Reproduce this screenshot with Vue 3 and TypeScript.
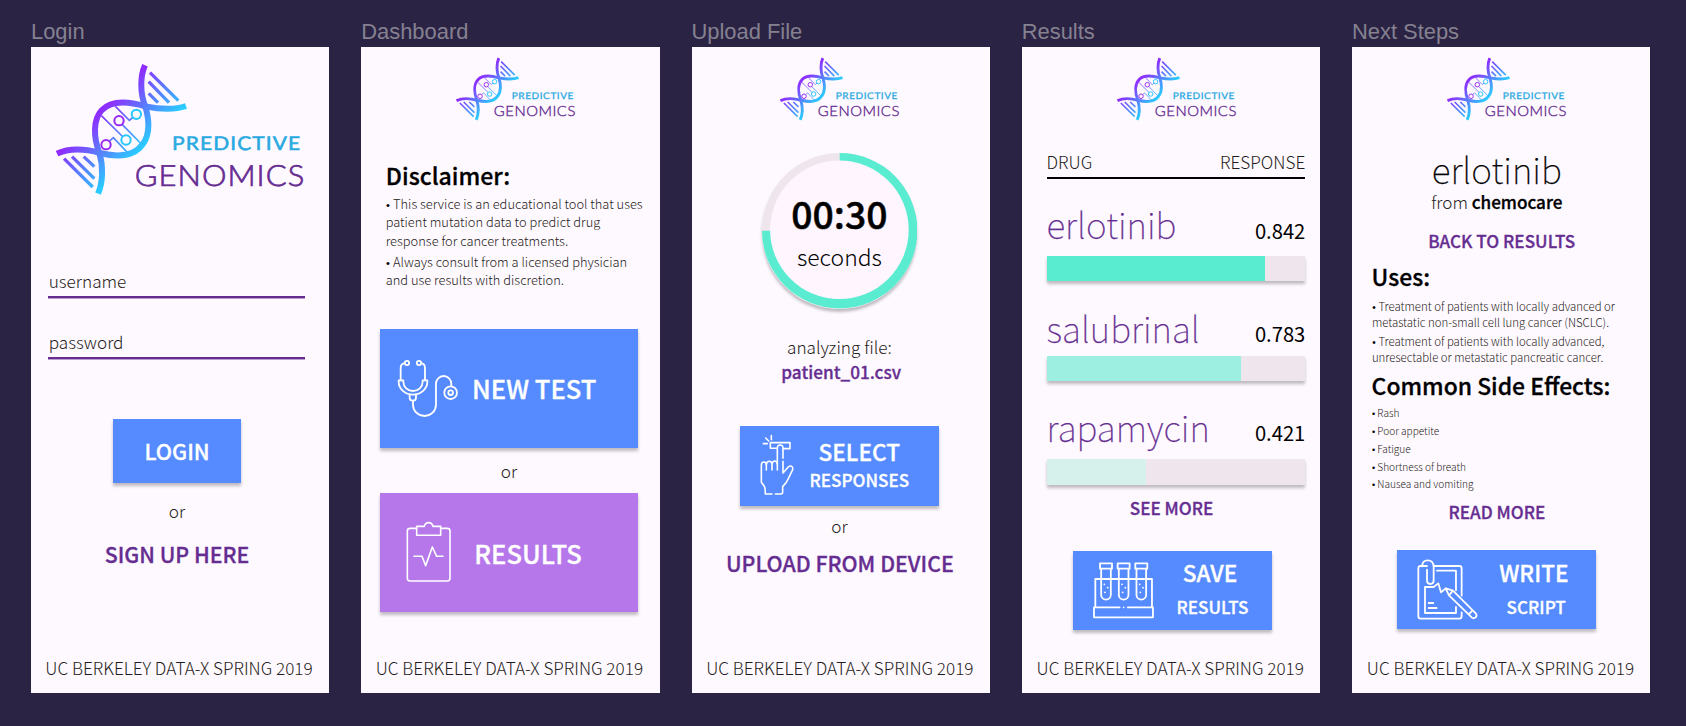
<script setup lang="ts">
interface DrugResult {
  name: string
  score: string
  fill: number
  color: string
}

const footer = 'UC BERKELEY DATA-X SPRING 2019'

const drugs: DrugResult[] = [
  { name: 'erlotinib', score: '0.842', fill: 84.6, color: '#5aecd1' },
  { name: 'salubrinal', score: '0.783', fill: 75.3, color: '#9df0e1' },
  { name: 'rapamycin', score: '0.421', fill: 38.5, color: '#d6f1eb' },
]

const sideEffects: string[] = ['Rash', 'Poor appetite', 'Fatigue', 'Shortness of breath', 'Nausea and vomiting']

const tubeCenters: number[] = [287, 340, 393]
</script>

<template>
  <div class="board">
    <svg class="defs" width="0" height="0" aria-hidden="true">
      <defs>
        <linearGradient id="helix" gradientUnits="userSpaceOnUse" x1="272" y1="272" x2="392" y2="392">
          <stop offset="0" stop-color="#8f2bff" />
          <stop offset="0.5" stop-color="#5a7dff" />
          <stop offset="1" stop-color="#29cdff" />
        </linearGradient>
        <symbol id="logo" viewBox="108 160 750 400">
          <g fill="none" stroke="url(#helix)">
            <path stroke-width="18" d="M375 167C360 200 360 252 376 290C389 335 391 374 368 404C342 441 292 443 240 430C196 418 150 414 111 432" />
            <path stroke-width="18" d="M498 289C460 302 420 299 376 290C322 274 272 273 245 302C219 330 220 382 238 430C250 470 249 518 234 552" />
            <path stroke-width="10" d="M390 189L475 273M386 216L447 279M386 251L414 279M132 447L218 532M156 441L223 507M191 441L223 471" />
            <path stroke-width="5" d="M244 318L309 382M286 290L328 332L340 322M307 345L364 403M269 394L280 384L322 428" />
            <g stroke-width="6">
              <circle cx="349" cy="314" r="14" stroke="#27c8ff" />
              <circle cx="318" cy="391" r="14" stroke="#27c8ff" />
              <circle cx="297" cy="333" r="14" stroke="#9a28f4" />
              <circle cx="258" cy="405" r="14" stroke="#9a28f4" />
            </g>
          </g>
          <text class="logo-top" x="456" y="420" textLength="388" lengthAdjust="spacingAndGlyphs">PREDICTIVE</text>
          <text class="logo-main" x="344" y="530" textLength="512" lengthAdjust="spacingAndGlyphs">GENOMICS</text>
        </symbol>
      </defs>
    </svg>

    <section class="frame">
      <h2 class="label">Login</h2>
      <div class="screen login">
        <svg class="logo-big"><use href="#logo" /></svg>
        <div class="field first">username</div>
        <div class="field">password</div>
        <button class="btn btn-login">LOGIN</button>
        <p class="or">or</p>
        <a class="link big">SIGN UP HERE</a>
        <footer class="foot">{{ footer }}</footer>
      </div>
    </section>

    <section class="frame">
      <h2 class="label">Dashboard</h2>
      <div class="screen dash">
        <svg class="logo"><use href="#logo" /></svg>
        <h3 class="title">Disclaimer:</h3>
        <div class="notes">
          <p><span class="dot">•</span>This service is an educational tool that uses<br>patient mutation data to predict drug<br>response for cancer treatments.</p>
          <p><span class="dot">•</span>Always consult from a licensed physician<br>and use results with discretion.</p>
        </div>
        <button class="btn tile tile-new">
          <svg class="icon" viewBox="108 145 190 182" width="63.3" height="60.7">
            <g class="line">
              <circle cx="141" cy="160" r="6.5" /><circle cx="177" cy="160" r="6.5" />
              <path d="M134 160Q122 162 122 175V212M184 160Q195 162 195 175V212" />
              <path d="M116 212H130V216A29 28 0 0 0 188 216V212H202V216A43 39 0 0 1 116 216Z" />
              <path d="M149 255V265Q149 273 158.500 273Q168 273 168 265V254" />
              <path d="M159 274V285A34.500 34 0 0 0 228 285V222A23 23 0 0 1 274 222V229" />
              <circle cx="272" cy="249" r="19" /><circle cx="272" cy="249" r="7" />
            </g>
          </svg>
          <span>NEW TEST</span>
        </button>
        <p class="or">or</p>
        <button class="btn tile tile-results">
          <svg class="icon" viewBox="135 630 141 190" width="47" height="63.3">
            <g class="line thin">
              <path d="M168 655H150Q142 655 142 663V805Q142 813 150 813H262Q270 813 270 805V663Q270 655 262 655H244" />
              <path d="M170 649H193Q196 638 206 638Q216 638 219 649H242V676H170Z" />
              <path d="M162 739H186L197 767L217 711L230 739H249" />
            </g>
          </svg>
          <span>RESULTS</span>
        </button>
        <footer class="foot">{{ footer }}</footer>
      </div>
    </section>

    <section class="frame">
      <h2 class="label">Upload File</h2>
      <div class="screen upload">
        <svg class="logo"><use href="#logo" /></svg>
        <div class="timer">
          <svg class="ring" viewBox="0 0 155.400 155.400">
            <circle cx="77.700" cy="77.700" r="77.700" fill="#efe5ed" />
            <path d="M77.700 77.700V0A77.700 77.700 0 1 1 0 77.700Z" fill="#5aecd1" />
            <circle cx="77.400" cy="76.800" r="69.300" fill="#fff5ff" />
          </svg>
          <strong class="time">00:30</strong>
          <span class="unit">seconds</span>
        </div>
        <p class="analyzing">analyzing file:</p>
        <p class="link filename">patient_01.csv</p>
        <button class="btn action action-select">
          <svg class="icon" viewBox="115 70 108 187" width="36" height="62.3">
            <g class="line thin">
              <path d="M128 99H140M135 82L144 91M152 75V87" />
              <path d="M168 113H149V96H208V114H189" />
              <path d="M170 178V112Q170 103 178.500 103Q187 103 187 112V143" />
              <path d="M137 178V163Q137 154 129.500 154Q122 154 122 163V215L131 227Q134 232 134 250H154" />
              <path d="M137 162Q138 152 146 152Q154 152 154 162V178M154 162Q155 151 163 151Q170 152 170 160" />
              <path d="M164 250H181Q186 250 186 244V228Q198 217 202 206L216 177Q218 166 208 166Q205 166 202 170L187 187V152" />
            </g>
          </svg>
          <span class="stack"><b>SELECT</b><i>RESPONSES</i></span>
        </button>
        <p class="or">or</p>
        <a class="link big">UPLOAD FROM DEVICE</a>
        <footer class="foot">{{ footer }}</footer>
      </div>
    </section>

    <section class="frame">
      <h2 class="label">Results</h2>
      <div class="screen results">
        <svg class="logo"><use href="#logo" /></svg>
        <div class="thead"><span>DRUG</span><span>RESPONSE</span></div>
        <div v-for="d in drugs" :key="d.name" class="drug">
          <div class="row"><span class="name">{{ d.name }}</span><span class="score">{{ d.score }}</span></div>
          <div class="bar"><div class="fill" :style="{ width: d.fill + '%', background: d.color }"></div></div>
        </div>
        <a class="link small">SEE MORE</a>
        <button class="btn action wide">
          <svg class="icon" viewBox="245 782 190 176" width="63.3" height="58.7">
            <g class="line">
              <g v-for="c in tubeCenters" :key="c">
                <rect :x="c - 18" y="789" width="36" height="16" />
                <path :d="`M${c - 14.5} 805V883A14.500 15 0 0 0 ${c + 14.5} 883V805`" />
                <path :d="`M${c - 5} 852h.1M${c + 5} 862h.1M${c - 3} 876h.1`" />
              </g>
              <path d="M255 920V836H425V920M328 921H251V951H428V921H352M340 921h.1" />
            </g>
          </svg>
          <span class="stack"><b>SAVE</b><i>RESULTS</i></span>
        </button>
        <footer class="foot">{{ footer }}</footer>
      </div>
    </section>

    <section class="frame">
      <h2 class="label">Next Steps</h2>
      <div class="screen next">
        <svg class="logo"><use href="#logo" /></svg>
        <h3 class="drug-title">erlotinib</h3>
        <p class="source">from <strong>chemocare</strong></p>
        <a class="link small back">BACK TO RESULTS</a>
        <h3 class="title uses">Uses:</h3>
        <div class="notes">
          <p><span class="dot">•</span>Treatment of patients with locally advanced or<br>metastatic non-small cell lung cancer (NSCLC).</p>
          <p><span class="dot">•</span>Treatment of patients with locally advanced,<br>unresectable or metastatic pancreatic cancer.</p>
        </div>
        <h3 class="title effects">Common Side Effects:</h3>
        <ul class="list">
          <li v-for="s in sideEffects" :key="s"><span class="dot">•</span>{{ s }}</li>
        </ul>
        <a class="link small more">READ MORE</a>
        <button class="btn action wide">
          <svg class="icon" viewBox="229 593 190 189" width="63.3" height="63">
            <g class="line">
              <path d="M284 617H359Q366 617 366 624V706M366 756V768Q366 775 359 775H243Q236 775 236 768V624Q236 617 243 617H262" />
              <path d="M247 618Q248 600 264 600Q282 600 282 620V660Q282 671 272 671Q262 671 262 660V628" />
              <path d="M292 631H349V690M349 740V758H256V680H282L296 669L304 696L318 684" />
              <path d="M267 728H281M267 743H291" />
              <path d="M318 684L340 691L409 760Q413 766 408 771Q402 776 397 772L328 705ZM340 691L328 705M399 750L387 762" />
            </g>
          </svg>
          <span class="stack"><b>WRITE</b><i>SCRIPT</i></span>
        </button>
        <footer class="foot">{{ footer }}</footer>
      </div>
    </section>
  </div>
</template>

<style>
body {
  margin: 0;
  background: #2b2343;
}
</style>

<style scoped>
.board {
  display: flex;
  gap: 32px;
  box-sizing: border-box;
  width: 1686px;
  height: 726px;
  padding: 19px 0 0 31px;
  overflow: hidden;
  background: #2b2343;
  font-family: "Noto Sans CJK SC", "Noto Sans", sans-serif;
}
.defs { position: absolute; }
.frame { flex: none; width: 298.25px; }
h2, h3, p, ul { margin: 0; padding: 0; font-weight: inherit; }
.label {
  height: 25px;
  margin-bottom: 3px;
  color: #858191;
  font: 21.9px/25px "Liberation Sans", Arial, sans-serif;
}
.screen {
  display: flex;
  flex-direction: column;
  align-items: center;
  box-sizing: border-box;
  height: 646px;
  padding-bottom: 15px;
  background: #fef9ff;
  color: #1e1c20;
  font-size: 17.2px;
  font-weight: 300;
  line-height: 21px;
  white-space: nowrap;
}
.screen > * { flex: none; }
.login { padding-right: 6.2px; }
.dash { padding-right: 2.8px; }
.upload { padding-right: 2.4px; }
.next { padding-right: 8.6px; }

.logo-top, .logo-main { text-rendering: geometricPrecision; letter-spacing: 3px; }
.logo-top { fill: #29a9e1; stroke: #29a9e1; stroke-width: 1.6; font: 400 57px Lato, sans-serif; }
.logo-main { fill: #662d91; stroke: #662d91; stroke-width: 2.2; font: 300 88px Lato, sans-serif; }
.logo-big { align-self: flex-start; width: 250px; height: 133.3px; margin: 16.3px 0 0 25px; }
.logo { align-self: flex-start; width: 120.2px; height: 64.1px; margin: 10px 0 0 94.8px; }
.upload .logo { margin-left: 88.5px; }

.field {
  align-self: flex-start;
  box-sizing: border-box;
  width: 256.7px;
  height: 28px;
  margin: 33px 0 0 17.3px;
  padding-left: 0.4px;
  border-bottom: 2px solid #662d91;
  box-shadow: 0 1px rgba(102, 45, 145, 0.45);
}
.field.first { margin-top: 73.4px; }

.btn {
  display: flex;
  align-items: flex-start;
  border: 0;
  padding: 0;
  background: #558bff;
  box-shadow: 0 3px 3px rgba(0, 0, 0, 0.25);
  color: #fff;
  font-family: inherit;
  font-weight: 500;
  -webkit-text-stroke: 0.3px #fff;
  white-space: nowrap;
}
.btn-login {
  justify-content: center;
  width: 127.3px;
  height: 64px;
  margin-top: 60px;
  padding-top: 19px;
  font-size: 21.6px;
  line-height: 25px;
}
.or { margin-top: 17px; }
.link { color: #662d91; font-weight: 500; -webkit-text-stroke: 0.3px #662d91; }
.big { margin: 20.5px 0 0 0.8px; font-size: 21.35px; line-height: 25px; }
.small { font-size: 17.15px; }
.login .big { margin-left: 0; margin-top: 20px; }
.foot { margin: auto 0 0 4px; font-size: 17.15px; }
.dash .foot, .upload .foot { margin-left: 0.8px; }
.results .foot { margin-left: -1.200px; }
.next .foot { margin-left: 7.400px; }

.title {
  align-self: flex-start;
  margin: 40px 0 0 24.6px;
  color: #000;
  font-size: 23.1px;
  font-weight: 500;
  line-height: 28px;
  -webkit-text-stroke: 0.3px #000;
}
.notes { align-self: flex-start; margin: 5.9px 0 0 24.4px; font-size: 12.85px; line-height: 18.3px; }
.notes p + p { margin-top: 3.2px; }
.dot { display: inline-block; width: 7.4px; color: #000; font-family: "Liberation Sans", sans-serif; font-size: 11px; line-height: 1; text-indent: 0.4px; }

.line { fill: none; stroke: #fff; stroke-width: 5.4; stroke-linecap: round; stroke-linejoin: round; }
.thin { stroke-width: 4.8; }
.icon { flex: none; display: block; }

.tile { box-sizing: border-box; width: 258.3px; height: 119.3px; font-size: 25.6px; line-height: 31px; }
.tile-new { margin-top: 39.1px; padding: 29.7px 0 0 16.3px; }
.tile-new span { margin: 13.8px 0 0 12.6px; }
.dash .or { margin-top: 12px; }
.tile-results { margin-top: 11.5px; padding: 27.7px 0 0 25.3px; background: #b577e9; }
.tile-results span { margin: 17.2px 0 0 22.2px; }

.timer {
  position: relative;
  display: flex;
  flex-direction: column;
  align-items: center;
  width: 155.4px;
  height: 155.4px;
  margin-top: 32.4px;
  border-radius: 50%;
  box-shadow: 0 3px 3px rgba(0, 0, 0, 0.25);
  color: #000;
}
.ring { position: absolute; inset: 0; width: 100%; height: 100%; }
.time { position: relative; margin-top: 39px; font-size: 37.3px; font-weight: 500; line-height: 43px; -webkit-text-stroke: 0.5px #000; }
.unit { position: relative; margin-top: 6.2px; font-size: 22.9px; line-height: 28px; }
.analyzing { margin-top: 27.5px; }
.filename { margin: 3.7px 0 0 3.6px; }
.upload .or { margin-top: 9px; }
.upload .big { margin-top: 14.7px; }

.action { box-sizing: border-box; width: 199px; height: 79.5px; }
.stack { display: flex; flex-direction: column; align-items: center; }
.stack b { font-size: 22.6px; font-weight: 500; line-height: 28px; }
.stack i { font-size: 17.15px; font-style: normal; line-height: 21px; }
.action-select { margin-top: 44px; padding: 7.7px 0 0 18.6px; }
.action-select .stack { width: 120px; margin: 4.6px 0 0 4.8px; }
.action-select i { margin-top: 3px; }
.wide { padding: 7.7px 0 0 19px; }
.wide .stack { width: 110px; margin: 1px 0 0 -0.8px; }
.wide i { margin: 9px 0 0 4.8px; }

.thead {
  display: flex;
  justify-content: space-between;
  align-self: flex-start;
  box-sizing: border-box;
  width: 258.7px;
  height: 27.800px;
  margin: 29.9px 0 0 24.8px;
  border-bottom: 2px solid #000;
}
.drug { align-self: flex-start; width: 258.7px; margin: 24.2px 0 0 24.8px; }
.row { display: flex; justify-content: space-between; height: 41px; }
.name { color: #662d91; font-size: 35.2px; font-weight: 100; line-height: 41px; -webkit-text-stroke: 0.25px #662d91; }
.score { margin: 16px -0.1px 0 0; color: #000; font-size: 20.2px; font-weight: 400; line-height: 24px; }
.bar { height: 25.5px; margin-top: 12px; background: #efe5ed; box-shadow: 0 3px 3px rgba(0, 0, 0, 0.25); }
.fill { height: 100%; }
.drug:nth-of-type(3) { margin-top: 25.5px; }
.drug:nth-of-type(3) .bar { margin-top: 7.7px; }
.drug:nth-of-type(3) .score { margin-top: 15px; }
.drug:nth-of-type(4) { margin-top: 24.9px; }
.drug:nth-of-type(4) .score { margin-top: 15.4px; }
.drug:nth-of-type(4) .bar { margin-top: 12.3px; }
.results .small { margin: 12.3px 0 0 1.3px; }
.results .action { margin: 32.500px 0 0 3.4px; padding-top: 10.1px; padding-left: 18.6px; }
.results .stack { margin: -1.4px 0 0 0.1px; }

.drug-title { margin-top: 26.6px; color: #000; font-size: 35.2px; font-weight: 100; line-height: 41px; -webkit-text-stroke: 0.25px #000; }
.source { margin-top: 2px; font-size: 17.1px; }
.source strong { color: #000; font-weight: 500; -webkit-text-stroke: 0.3px #000; }
.back { margin: 18.6px 0 0 9.6px; }
.next .title { margin-left: 19.6px; font-size: 22.9px; }
.next .uses { margin-top: 11px; }
.next .effects { margin-top: 5.4px; }
.next .notes { margin: 7.4px 0 0 19.9px; font-size: 11.4px; line-height: 16px; }
.next .notes p + p { margin-top: 3.6px; }
.next .dot { width: 6.6px; font-size: 10px; }
.list { align-self: flex-start; margin: 5.2px 0 0 19.8px; font-size: 10.1px; line-height: 17.900px; list-style: none; }
.list li { height: 17.9px; }
.next .list .dot { width: 5.5px; font-size: 9px; text-indent: 0.2px; }
.more { margin-top: 7.3px; }
.next .action { margin-top: 28.3px; }
</style>
